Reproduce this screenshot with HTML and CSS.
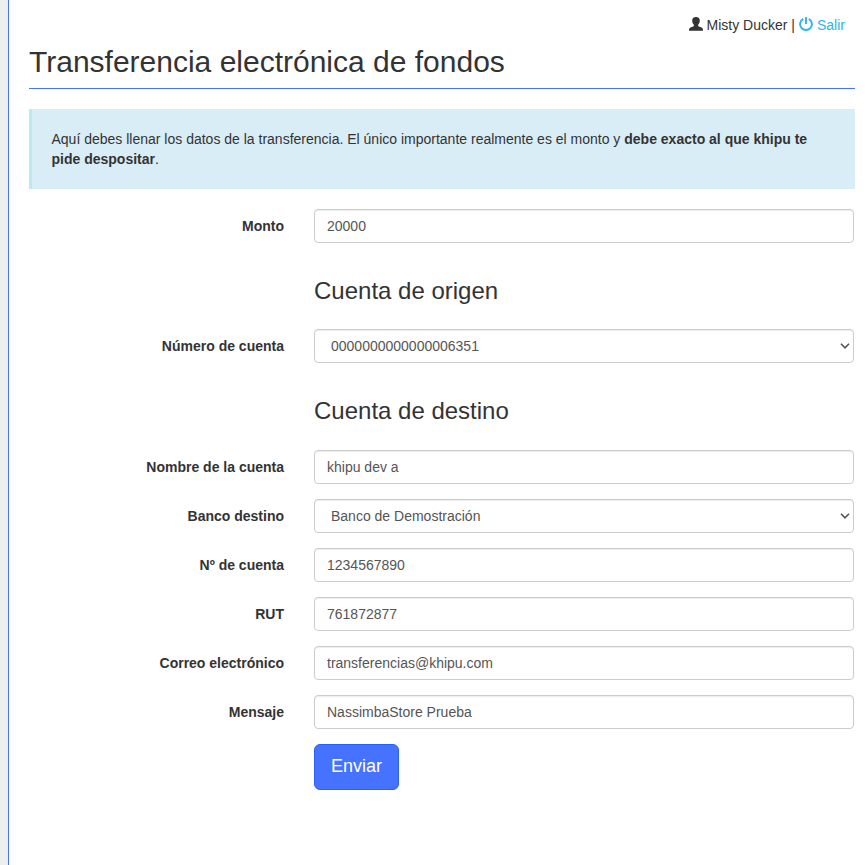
FILE: index.html
```html
<!DOCTYPE html>
<html lang="es">
<head>
<meta charset="utf-8">
<title>Transferencia electrónica de fondos</title>
<link rel="stylesheet" href="styles.css">
</head>
<body>
<main class="content">
  <div class="user-bar">
    <svg class="icon icon-user" viewBox="0 0 14 14"><path fill="currentColor" d="M7 0C4.400 0 3.200 1.300 3.200 3.500c0 1.800.6 3.200 1.600 4.200.3.700.1 1.300-.6 1.700L1.400 10.600C.3 11.200 0 12 0 13.800h14c0-1.800-.3-2.600-1.400-3.200L9.800 9.400c-.7-.4-.9-1-.6-1.700 1-1 1.600-2.400 1.600-4.200C10.800 1.300 9.600 0 7 0z"/></svg>
    <span class="user-name">Misty Ducker |</span>
    <a class="logout"><svg class="icon icon-off" viewBox="0 0 14 14"><g fill="none" stroke="currentColor" stroke-width="1.900"><path d="M4.200 1.900A5.900 5.900 0 1 0 9.800 1.900"/><path d="M7 0v7"/></g></svg><span>Salir</span></a>
  </div>
  <h1 class="title">Transferencia electrónica de fondos</h1>
  <p class="callout">Aquí debes llenar los datos de la transferencia. El único importante realmente es el monto y <strong>debe exacto al que khipu te pide despositar</strong>.</p>
  <form class="form">
    <label class="label" for="monto">Monto</label>
    <input class="control" id="monto" value="20000">
    <h3 class="section">Cuenta de origen</h3>
    <label class="label" for="origen">Número de cuenta</label>
    <div class="select"><select class="control" id="origen"><option>0000000000000006351</option></select><svg class="chevron" viewBox="0 0 10 6"><path d="M1 .8l4 4 4-4"/></svg></div>
    <h3 class="section">Cuenta de destino</h3>
    <label class="label" for="nombre">Nombre de la cuenta</label>
    <input class="control" id="nombre" value="khipu dev a">
    <label class="label" for="banco">Banco destino</label>
    <div class="select"><select class="control" id="banco"><option>Banco de Demostración</option></select><svg class="chevron" viewBox="0 0 10 6"><path d="M1 .8l4 4 4-4"/></svg></div>
    <label class="label" for="cuenta">Nº de cuenta</label>
    <input class="control" id="cuenta" value="1234567890">
    <label class="label" for="rut">RUT</label>
    <input class="control" id="rut" value="761872877">
    <label class="label" for="correo">Correo electrónico</label>
    <input class="control" id="correo" value="transferencias@khipu.com">
    <label class="label" for="mensaje">Mensaje</label>
    <input class="control" id="mensaje" value="NassimbaStore Prueba">
    <button class="submit" type="button">Enviar</button>
  </form>
</main>
</body>
</html>
```
FILE: styles.css
```css
* { box-sizing: border-box; }

body {
  margin: 0;
  padding-left: 8px;
  background: #eee;
  color: #333;
  font: 14px/20px "Liberation Sans", Arial, sans-serif;
}

.content {
  min-height: 100vh;
  padding: 15px 10px 0 20px;
  border-left: 1px solid #4573ff;
  background: #fff;
}

.user-bar {
  display: flex;
  justify-content: flex-end;
  gap: 4px;
  padding-right: 10px;
}

.icon { width: 14px; height: 14px; flex: none; }
.icon-user { margin-top: 2px; }
.icon-off { margin: 2px 4px 0 0; }

.logout { display: flex; color: #2fb4e9; }

.title {
  margin: 9px 0 20px;
  padding-bottom: 9px;
  border-bottom: 1px solid #4573ff;
  font-size: 30px;
  font-weight: 400;
  line-height: 35px;
}

.callout {
  margin: 0 0 20px;
  padding: 20px 20px 20px 19.5px;
  border-left: 3px solid #bce8f1;
  background: #d9edf7;
}

.form {
  display: grid;
  grid-template-columns: 255px 540px;
  column-gap: 30px;
  row-gap: 15px;
}

.label {
  padding-top: 7px;
  font-weight: 700;
  text-align: right;
}

.section {
  grid-column: 2;
  margin: 20px 0 10px;
  font-size: 24px;
  font-weight: 400;
  line-height: 26.4px;
}

.control {
  display: block;
  width: 100%;
  height: 34px;
  padding: 6px 12px;
  border: 1px solid #ccc;
  border-radius: 4px;
  background: #fff;
  box-shadow: inset 0 1px 1px rgba(0, 0, 0, .075);
  color: #555;
  font: inherit;
  appearance: none;
}

.select { position: relative; }
.select .control { padding-left: 16px; }

.chevron {
  position: absolute;
  top: 14px;
  right: 4px;
  width: 10px;
  height: 6px;
  fill: none;
  stroke: #555;
  stroke-width: 1.6;
}

.submit {
  grid-column: 2;
  justify-self: start;
  height: 46px;
  padding: 9px 16px 11px;
  border: 1px solid #2b5ffb;
  border-radius: 6px;
  background: #4573ff;
  color: #fff;
  font: 18px/24px "Liberation Sans", Arial, sans-serif;
}
```
